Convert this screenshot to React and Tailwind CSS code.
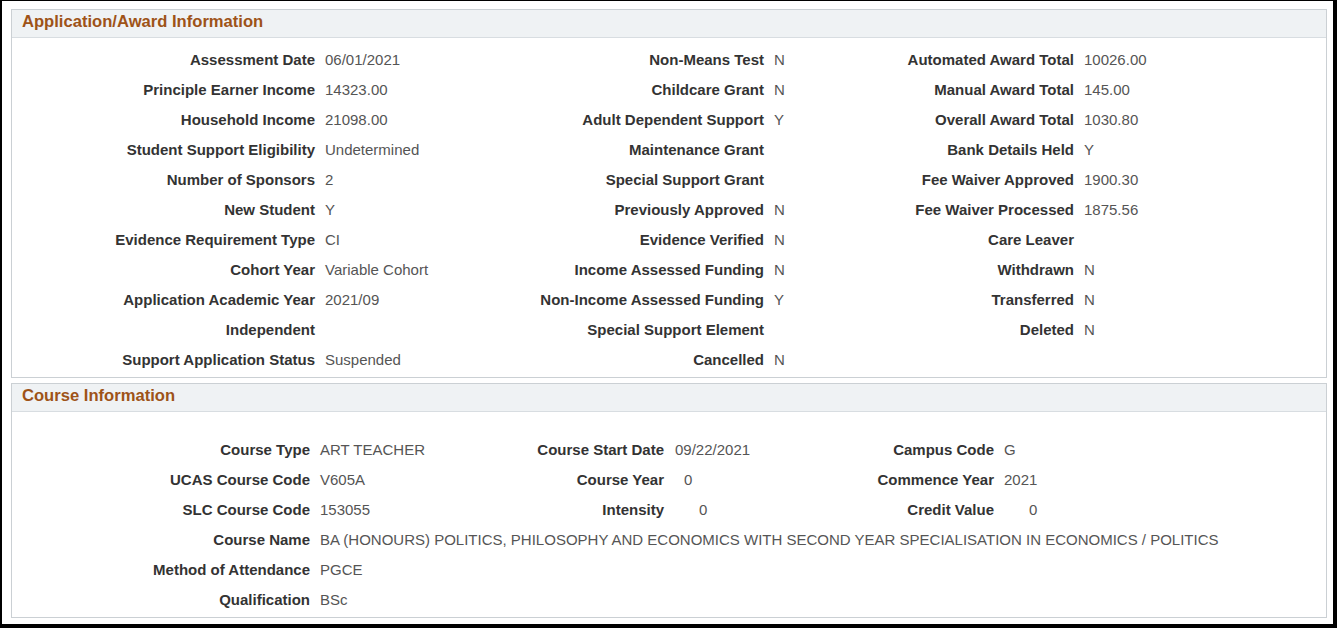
import React from 'react';

const appCols = [
  {
    width: 'w-[503px]',
    label: 'w-[303px]',
    rows: [
      ['Assessment Date', '06/01/2021'],
      ['Principle Earner Income', '14323.00'],
      ['Household Income', '21098.00'],
      ['Student Support Eligibility', 'Undetermined'],
      ['Number of Sponsors', '2'],
      ['New Student', 'Y'],
      ['Evidence Requirement Type', 'CI'],
      ['Cohort Year', 'Variable Cohort'],
      ['Application Academic Year', '2021/09'],
      ['Independent', ''],
      ['Support Application Status', 'Suspended'],
    ],
  },
  {
    width: 'w-[350px]',
    label: 'w-[249px]',
    rows: [
      ['Non-Means Test', 'N'],
      ['Childcare Grant', 'N'],
      ['Adult Dependent Support', 'Y'],
      ['Maintenance Grant', ''],
      ['Special Support Grant', ''],
      ['Previously Approved', 'N'],
      ['Evidence Verified', 'N'],
      ['Income Assessed Funding', 'N'],
      ['Non-Income Assessed Funding', 'Y'],
      ['Special Support Element', ''],
      ['Cancelled', 'N'],
    ],
  },
  {
    width: 'w-[400px]',
    label: 'w-[209px]',
    rows: [
      ['Automated Award Total', '10026.00'],
      ['Manual Award Total', '145.00'],
      ['Overall Award Total', '1030.80'],
      ['Bank Details Held', 'Y'],
      ['Fee Waiver Approved', '1900.30'],
      ['Fee Waiver Processed', '1875.56'],
      ['Care Leaver', ''],
      ['Withdrawn', 'N'],
      ['Transferred', 'N'],
      ['Deleted', 'N'],
    ],
  },
];

function Field({ label, value, labelWidth, valueClass = 'ml-[10px]' }) {
  return (
    <div className="flex items-center h-[30px] whitespace-nowrap">
      <span className={`${labelWidth} shrink-0 text-right font-bold text-[#333333]`}>{label}</span>
      <span className={`${valueClass} text-[#555555]`}>{value}</span>
    </div>
  );
}

function Panel({ title, children, className = '' }) {
  return (
    <div className={`border border-[#cbd0d4] bg-white ${className}`}>
      <div className="h-[28px] flex items-center pl-[10px] pb-[4px] bg-[#eff2f4] border-b border-[#d8dde1]">
        <h2 className="text-[16.6px] leading-[20px] font-bold text-[#9e5318]">{title}</h2>
      </div>
      {children}
    </div>
  );
}

export default function App() {
  return (
    <div
      className="w-[1337px] h-[628px] overflow-hidden bg-white border-l-2 border-t border-r-4 border-b-4 border-black pl-[9px] pr-[6px] pt-[8px] text-[15px]"
      style={{ fontFamily: '"Liberation Sans", Arial, sans-serif' }}
    >
      <Panel title="Application/Award Information">
        <div className="flex pt-[7px] pb-[2px]">
          {appCols.map((col, i) => (
            <div key={i} className={`${col.width} shrink-0`}>
              {col.rows.map(([l, v]) => (
                <Field key={l} label={l} value={v} labelWidth={col.label} />
              ))}
            </div>
          ))}
        </div>
      </Panel>

      <Panel title="Course Information" className="mt-[5px]">
        <div className="flex pt-[23px] pb-[2px]">
          <div className="w-[418px] shrink-0">
            <Field label="Course Type" value="ART TEACHER" labelWidth="w-[298px]" />
            <Field label="UCAS Course Code" value="V605A" labelWidth="w-[298px]" />
            <Field label="SLC Course Code" value="153055" labelWidth="w-[298px]" />
            <Field
              label="Course Name"
              value="BA (HONOURS) POLITICS, PHILOSOPHY AND ECONOMICS WITH SECOND YEAR SPECIALISATION IN ECONOMICS / POLITICS"
              labelWidth="w-[298px]"
            />
            <Field label="Method of Attendance" value="PGCE" labelWidth="w-[298px]" />
            <Field label="Qualification" value="BSc" labelWidth="w-[298px]" />
          </div>
          <div className="w-[350px] shrink-0">
            <Field label="Course Start Date" value="09/22/2021" labelWidth="w-[234px]" valueClass="ml-[11px]" />
            <Field label="Course Year" value="0" labelWidth="w-[234px]" valueClass="ml-[20px]" />
            <Field label="Intensity" value="0" labelWidth="w-[234px]" valueClass="ml-[35px]" />
          </div>
          <div className="w-[400px] shrink-0">
            <Field label="Campus Code" value="G" labelWidth="w-[214px]" />
            <Field label="Commence Year" value="2021" labelWidth="w-[214px]" />
            <Field label="Credit Value" value="0" labelWidth="w-[214px]" valueClass="ml-[35px]" />
          </div>
        </div>
      </Panel>
    </div>
  );
}
